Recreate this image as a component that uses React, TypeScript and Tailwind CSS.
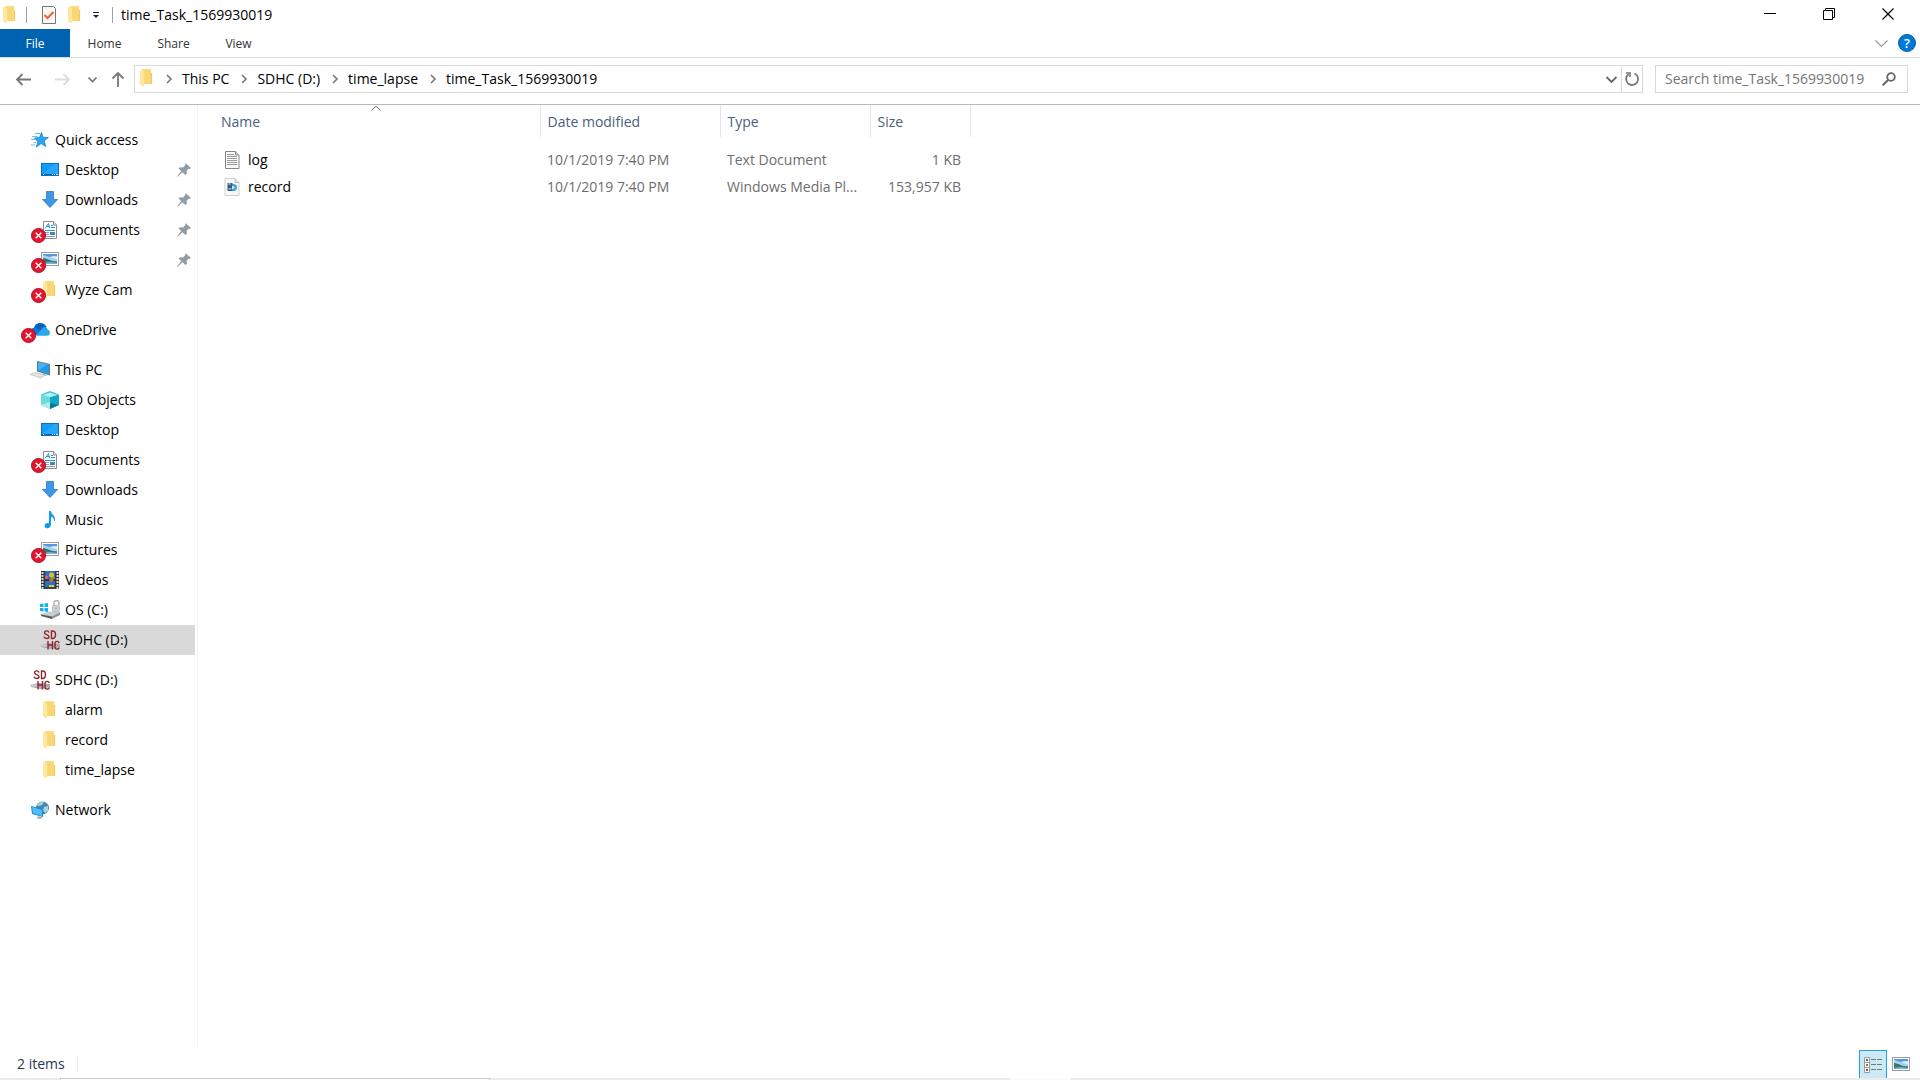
import React from "react";

type IconProps = { className?: string };

const Svg = ({ children, className = "", box = 18 }: { children: React.ReactNode; className?: string; box?: number }) => (
  <svg viewBox={`0 0 ${box} ${box}`} className={`shrink-0 ${className || "size-[18px]"}`} aria-hidden="true">
    {children}
  </svg>
);

const Folder = () => (
  <Svg>
    <path d="M4 0h9v4.500h1V15H4z" fill="#ffdb7c" />
    <path d="M12.800 4h1.300v11H8z" fill="#f0cb66" />
    <path d="M6 1.500h7V15H7z" fill="#f9d777" />
    <path d="M2 .8l4 1.700v15L2 15.500z" fill="#ffe79c" />
  </Svg>
);
const Star = () => (
  <Svg>
    <path d="M10.500 1.500l1.600 4.800 5.300.2-4.200 3.300 1.500 5.700-4.500-3-4.800 3.500 1.400-5.500L3.500 7l5-.5z" fill="#2ba5ef" stroke="#1682cf" strokeWidth=".8" />
    <path d="M4 2.500h5M1 5.500h5.500M0 8.500h4M2.500 11.500h2.500M0 14h4" stroke="#6fbdf0" strokeWidth="1" />
  </Svg>
);
const Desktop = () => (
  <Svg>
    <rect x=".5" y="2.500" width="17" height="12" fill="#139bfb" stroke="#0b70bd" />
    <path d="M1 14L13 3h4v9z" fill="#35adff" opacity=".6" />
    <path d="M1 13.500h16" stroke="#0761a8" />
    <path d="M2 13.500h1M11 13.500h1M13 13.500h1M15 13.500h2" stroke="#fff" />
  </Svg>
);
const Download = () => (
  <Svg><path d="M5.500.5h7v8h4L9 16.500 1.500 8.500h4z" fill="#3d97e5" stroke="#2879c5" strokeWidth=".8" /></Svg>
);
const Doc = () => (
  <Svg>
    <path d="M2.500.5h10l3 3.500v13.500h-13z" fill="#fff" stroke="#8b8b8b" />
    <path d="M12.500.5V4h3" fill="#e5e5e5" stroke="#8b8b8b" />
    <path d="M4 7.500L7.500 2.500 8.500 7M6 5.500h3M10 4.500h2M10 6.500h4M4 9.500h10" stroke="#2394dc" fill="none" />
    <path d="M4 11.500h4M4 13.500h4M4 15.500h10" stroke="#8b9aa7" />
    <rect x="9" y="11" width="5" height="3" fill="#3d88b5" />
  </Svg>
);
const Picture = () => (
  <Svg>
    <rect x=".5" y="1.500" width="17" height="13" fill="#fff" stroke="#9c9c9c" />
    <path d="M2 3h14v10H2z" fill="#a8d2f3" />
    <path d="M2 3h14v2L9 6 2 4z" fill="#5499df" />
    <path d="M9 6c3-1 5-1 7 0v2c-3-1-5-1-7-2z" fill="#e6f3fc" />
    <path d="M2 7c4 0 6 3 14 3.500v.5H2z" fill="#39765a" />
    <path d="M2 10.500h14V13H2z" fill="#387dac" />
    <path d="M2 12l7-1 7 1v1H2z" fill="#78b5c9" />
  </Svg>
);
const Cloud = () => (
  <Svg className="-ml-px size-5" box={20}>
    <path d="M4 8c1-6 10-7 12.500-1L11 12 5 9z" fill="#0862b8" />
    <path d="M0 12c0-3.500 4-5.500 7.500-3.500L17 15H4c-2.500 0-4-1.500-4-3z" fill="#0f78d4" />
    <path d="M6 15.500l6-7c3-3 5.500-1 5.500 1 3.500 1 3 6.300-.5 6.300H5z" fill="#28a8ea" />
  </Svg>
);
const Computer = () => (
  <Svg className="-ml-px size-5" box={20}>
    <path d="M7 1l13 3v11.500L7 11.500z" fill="#68747d" />
    <path d="M8 2.200l11 2.600V14L8 10.500z" fill="#45b5fa" />
    <path d="M8 10.500L17 4.500l2 .3V14z" fill="#219de8" />
    <path d="M12 13l3 1 2 2-4-1z" fill="#9aa5ac" />
    <path d="M0 14.500l5-2 10 2.500-4 3z" fill="#e0e3e6" stroke="#b5babf" strokeWidth=".6" />
  </Svg>
);
const Cube = () => (
  <Svg>
    <path d="M0 3.500L9 6v12l-9-4z" fill="#6ed9dc" />
    <path d="M9 6l9-2.500V14l-9 4z" fill="#10a8c2" />
    <path d="M0 3.500L9 0l9 3.500L9 6z" fill="#3cc3cf" />
    <path d="M2 4l7-2.500L16 4 9 6z" fill="#b6f1ef" />
    <path d="M0 14l9-3v7z" fill="#a7edec" />
    <path d="M9 12l9 2-9 4z" fill="#087b94" />
  </Svg>
);
const Music = () => (
  <Svg>
    <path d="M8 0h2c0 4 5 4 4 10h-1c0-3-1-4-3-4v7c0 3-2 5-5 4-2-1-2-4 1-5h2z" fill="#0c9cf0" />
  </Svg>
);
const Video = () => (
  <Svg>
    <path d="M0 0h18v18H0z" fill="#343434" />
    <path d="M1.500 1v17M16.500 1v17" stroke="#ddd" strokeWidth="2" strokeDasharray="2 1" />
    <path d="M4 0h10v8H4zM4 10h10v8H4z" fill="#2c6fc4" />
    <path d="M4 6h3v2H4zM10 6h4v2h-4z" fill="#7c993e" />
    <circle cx="10.500" cy="4" r="2.500" fill="#e5be2c" /><circle cx="5.500" cy="6" r="1.500" fill="#d45ca5" />
    <path d="M8 8h5l-2 3H9z" fill="#d27021" /><path d="M8 14h5v2H8z" fill="#e9c531" /><path d="M4 16h10v2H4z" fill="#304e37" />
  </Svg>
);
const Drive = () => (
  <Svg className="-ml-px size-5" box={20}>
    <path d="M0 4l3.500-.5V7H0zM4.500 3.400L8 3v4H4.500zM0 8h3.500v3.500L0 11zM4.500 8H8v4l-3.500-.4z" fill="#12b2ef" />
    <path d="M1 14l8-2.500 11 .5v2l-8 3.500-11-2z" fill="#c8cdd0" />
    <path d="M1 14.500l11 2V19L1 16z" fill="#555d63" /><path d="M12 16.500l8-4V15l-8 4z" fill="#8c9499" />
    <path d="M14 6V3a2.500 2.500 0 0 1 5 0v2" stroke="#a7adb1" fill="none" strokeWidth="1.300" />
    <rect x="12.500" y="5.500" width="7" height="6" rx="1" fill="#d0d4d6" stroke="#969ea3" strokeWidth=".6" />
    <path d="M16 7.500v2" stroke="#838b90" />
  </Svg>
);
const SdCard = () => (
  <Svg className="-ml-px size-5" box={20}>
    <path d="M1 15l7-2 12 1v3l-9 2-10-2z" fill="#a5abaf" /><path d="M0 14.500h9v2H0z" fill="#cbd0d3" />
    <path d="M9 2.700C8.500.3 4.500.3 4.500 2.700c0 2.300 4.500 1.500 4.500 4 0 2.400-4.500 2.400-5 0M11.500 1v7.500h1c4 0 4-7.500 0-7.500zM8 11v8.500M12.500 11v8.500M8 15h4.500M19.200 13c-.5-2.300-4.200-2.300-4.200.5v3.500c0 2.800 3.700 2.800 4.200.5" stroke="#91272e" strokeWidth="1.400" fill="none" />
  </Svg>
);
const Network = () => (
  <Svg>
    <circle cx="11.500" cy="7" r="6.500" fill="#438bae" />
    <path d="M6 5c2-5 6-4 7-4l-2 3-3 1zM13 6l4-1v5l-3 2-2-3z" fill="#a8d2dd" />
    <path d="M0 5l12 3v8L1 13z" fill="#168bd7" /><path d="M1 6l10 3v6L2 12z" fill="#54bcfa" />
    <path d="M7 15v1l-2 1 4 1 3-1-2-1z" fill="#a5acb1" />
  </Svg>
);
const TextFile = () => (
  <Svg>
    <path d="M1.500.5h10l3.500 3.500v13.500H1.500z" fill="#f8f8f8" stroke="#858585" /><path d="M11.500.5V4H15" fill="#ddd" stroke="#858585" />
    <path d="M3 3.500h7M3 5.500h10M3 7.500h10M3 9.500h10M3 11.500h10M3 13.500h10" stroke="#9b9b9b" />
  </Svg>
);
const MediaFile = () => (
  <Svg>
    <path d="M1 .5h10l4 4v13H1z" fill="#f8f8f8" stroke="#d0d0d0" /><path d="M11 .5v4h4" fill="#e5e5e5" stroke="#bbb" />
    <circle cx="9.500" cy="9.500" r="3.500" fill="#38a9e8" /><path d="M3.500 5h5v8h-5z" fill="#385b78" />
    <path d="M4.500 5h2v2h-2zM4.500 10h3v1.500h-3z" fill="#88b8da" /><path d="M8 7.500l3 2-3 2z" fill="#d9f0fc" />
  </Svg>
);
const TaskIcon = () => (
  <Svg><path d="M2.500.5h11l2 2v15h-13z" fill="#f8f8f8" stroke="#777" /><path d="M4.500 9l3 3 6-6" fill="none" stroke="#ef622c" strokeWidth="2" /></Svg>
);
const Pin = () => (
  <Svg className="size-3.5" box={14}>
    <path d="M8.500 0L14 5l-1.500 1-1-.2-2 2.200.5 2.500-1.500 1.500L5.300 9.200 1 13.500H0L4.200 8 1.500 5.500 3 4.200l3 .3L8.300 2z" fill="#929ca4" />
  </Svg>
);
const Chevron = ({ className }: IconProps) => (
  <Svg box={12} className={className}><path d="M4 2l4 4-4 4" fill="none" stroke="currentColor" strokeWidth="1.600" /></Svg>
);
const ErrorBadge = () => (
  <svg viewBox="0 0 16 16" className="absolute top-[7px] -left-2.5 size-[15px]" aria-label="Sync error">
    <circle cx="8" cy="8" r="7.500" fill="#e2152d" stroke="#a80f23" />
    <path d="M5 5l6 6M11 5l-6 6" stroke="#fff" strokeWidth="1.500" />
  </svg>
);

type Item = { label: string; icon: () => React.ReactElement; root?: boolean; pin?: boolean; error?: boolean; selected?: boolean };
const groups: Item[][] = [
  [
    { label: "Quick access", icon: Star, root: true },
    { label: "Desktop", icon: Desktop, pin: true },
    { label: "Downloads", icon: Download, pin: true },
    { label: "Documents", icon: Doc, pin: true, error: true },
    { label: "Pictures", icon: Picture, pin: true, error: true },
    { label: "Wyze Cam", icon: Folder, error: true },
  ],
  [{ label: "OneDrive", icon: Cloud, root: true, error: true }],
  [
    { label: "This PC", icon: Computer, root: true },
    { label: "3D Objects", icon: Cube },
    { label: "Desktop", icon: Desktop },
    { label: "Documents", icon: Doc, error: true },
    { label: "Downloads", icon: Download },
    { label: "Music", icon: Music },
    { label: "Pictures", icon: Picture, error: true },
    { label: "Videos", icon: Video },
    { label: "OS (C:)", icon: Drive },
    { label: "SDHC (D:)", icon: SdCard, selected: true },
  ],
  [
    { label: "SDHC (D:)", icon: SdCard, root: true },
    { label: "alarm", icon: Folder },
    { label: "record", icon: Folder },
    { label: "time_lapse", icon: Folder },
  ],
  [{ label: "Network", icon: Network, root: true }],
];

const files = [
  { name: "log", icon: TextFile, date: "10/1/2019 7:40 PM", type: "Text Document", size: "1 KB" },
  { name: "record", icon: MediaFile, date: "10/1/2019 7:40 PM", type: "Windows Media Pl...", size: "153,957 KB" },
];

const crumbs = ["This PC", "SDHC (D:)", "time_lapse", "time_Task_1569930019"];

function TitleBar() {
  return (
    <header className="flex h-[29px] items-center">
      <div className="flex items-center pl-px">
        <Folder />
        <span className="ml-[7px] h-4 w-px bg-gray-400" />
        <button className="ml-[13px]" aria-label="Properties"><TaskIcon /></button>
        <button className="ml-2" aria-label="New folder"><Folder /></button>
        <button className="ml-2" aria-label="Customize toolbar">
          <Svg box={8} className="size-2"><path d="M1 1.500h6" stroke="#222" /><path d="M1 4h6L4 7z" fill="#222" /></Svg>
        </button>
        <span className="ml-[12px] h-4 w-px bg-gray-400" />
      </div>
      <h1 className="ml-2 flex-1 text-[14px]">time_Task_1569930019</h1>
      <div className="flex gap-[46px] pr-[25px]">
        <button aria-label="Minimize"><Svg box={13} className="size-[13px]"><path d="M0 5.500h12" stroke="#000" /></Svg></button>
        <button aria-label="Restore"><Svg box={13} className="size-[13px]"><path d="M.5 2.500h9v9H.5zM2.500 2.500v-2h9v9h-2" fill="none" stroke="#000" /></Svg></button>
        <button aria-label="Close"><Svg box={13} className="size-[13px]"><path d="M.5.5l11 11M11.500.5l-11 11" stroke="#000" strokeWidth="1.200" /></Svg></button>
      </div>
    </header>
  );
}

function Ribbon() {
  return (
    <nav className="flex h-[29px] items-stretch border-b border-[#dadbdc] text-[12px] text-[#333]">
      <button className="w-[70px] bg-[#0063b1] pt-px text-white">File</button>
      <button className="w-[69px] pt-px">Home</button>
      <button className="w-[69px] pt-px">Share</button>
      <button className="w-[61px] pt-px">View</button>
      <div className="flex flex-1 items-center justify-end gap-[10px] pr-1">
        <button aria-label="Expand ribbon"><Svg box={13} className="size-[13px]"><path d="M.5 3.500l6 6 6-6" fill="none" stroke="#999" strokeWidth="1.200" /></Svg></button>
        <button aria-label="Help" className="size-[18px] rounded-full border border-[#0063b1] bg-[#0078d7] text-[13px] leading-4 font-semibold text-white">?</button>
      </div>
    </nav>
  );
}

function AddressBar() {
  return (
    <div className="flex h-[47px] items-center border-b border-[#b9b9b9] pr-3 pb-1 text-[14px]">
      <div className="flex w-[134px] shrink-0 items-center text-[#777]">
        <button aria-label="Back" className="ml-4"><Svg box={16} className="size-4"><path d="M15 8.500H1M6.500 3L1 8.500 6.500 14" stroke="currentColor" strokeWidth="1.800" fill="none" /></Svg></button>
        <button aria-label="Forward" className="ml-[23px] text-[#ddd]"><Svg box={16} className="size-4"><path d="M0 8.500h14M8.500 3L14 8.500 8.500 14" stroke="currentColor" strokeWidth="1.800" fill="none" /></Svg></button>
        <button aria-label="Recent locations" className="ml-[17px]"><Svg box={9} className="size-[9px]"><path d="M.5 2.500l4 4 4-4" stroke="currentColor" strokeWidth="1.600" fill="none" /></Svg></button>
        <button aria-label="Up" className="ml-[13px]"><Svg box={16} className="size-4"><path d="M8 16V2M2.500 7.500L8 2l5.500 5.500" stroke="currentColor" strokeWidth="1.800" fill="none" /></Svg></button>
      </div>
      <div className="flex h-7 flex-1 items-center border border-[#d9d9d9] pl-[3px]">
        <span className="-mt-0.5"><Folder /></span>
        <ol className="flex flex-1 items-center gap-0.5">
          {crumbs.map((c) => (
            <li key={c} className="flex items-center">
              <Chevron className="mr-[7px] ml-[7px] size-3 text-[#777]" />
              <a href="#">{c}</a>
            </li>
          ))}
        </ol>
        <button aria-label="Previous locations" className="px-1 text-[#666]"><Svg box={11} className="size-[11px]"><path d="M.5 3l5 5 5-5" stroke="currentColor" strokeWidth="1.800" fill="none" /></Svg></button>
        <button aria-label="Refresh" className="flex h-full w-[21px] items-center justify-center border-l border-[#d9d9d9] text-[#777]">
          <Svg box={16} className="size-4"><path d="M10.500 2.500A6 6 0 1 1 4.500 3.200" stroke="currentColor" strokeWidth="1.800" fill="none" /><path d="M2 2h4v4" stroke="currentColor" strokeWidth="1.600" fill="none" /></Svg>
        </button>
      </div>
      <label className="ml-3 flex h-7 w-[253px] items-center border border-[#d9d9d9] pr-[11px] pl-[9px]">
        <input type="search" aria-label="Search folder" placeholder="Search time_Task_1569930019" className="min-w-0 flex-1 outline-none placeholder:text-[#757575]" />
        <Svg box={14} className="size-3.5"><circle cx="9" cy="5" r="3.800" stroke="#666" strokeWidth="1.800" fill="none" /><path d="M6.300 7.700L.7 13.300" stroke="#666" strokeWidth="2" /></Svg>
      </label>
    </div>
  );
}

function Sidebar() {
  return (
    <aside className="flex w-[198px] shrink-0 flex-col gap-[10px] border-r border-[#f3f3f3] pt-5 pr-[2px]">
      {groups.map((group, g) => (
        <ul key={g}>
          {group.map(({ label, icon: Icon, root, pin, error, selected }) => (
            <li key={label}>
              <a href="#" className={`flex h-[30px] items-center pr-1 ${root ? "pl-[31px]" : "pl-[41px]"} ${selected ? "bg-[#d9d9d9]" : ""}`}>
                <span className="relative flex h-[18px] w-[18px] shrink-0 items-center">
                  <Icon />
                  {error && <ErrorBadge />}
                </span>
                <span className="ml-1.5 flex-1">{label}</span>
                {pin && <Pin />}
              </a>
            </li>
          ))}
        </ul>
      ))}
    </aside>
  );
}

function FileTable() {
  return (
    <main className="flex-1 pl-[9px]">
      <table className="w-[763px] table-fixed border-collapse text-left">
        <colgroup><col className="w-[333px]" /><col className="w-[180px]" /><col className="w-[150px]" /><col className="w-[100px]" /></colgroup>
        <thead>
          <tr className="h-8 text-[#4c607a]">
            <th className="relative border-r border-[#e5e5e5] pt-0.5 pl-3.5 font-normal">
              <Svg box={10} className="absolute -top-px left-[164px] size-2.5"><path d="M.5 6.500L5 2l4.500 4.500" fill="none" stroke="#777" /></Svg>
              Name
            </th>
            <th className="border-r border-[#e5e5e5] pt-0.5 pl-[7px] font-normal">Date modified</th>
            <th className="border-r border-[#e5e5e5] pt-0.5 pl-[7px] font-normal">Type</th>
            <th className="border-r border-[#e5e5e5] pt-0.5 pl-[7px] font-normal">Size</th>
          </tr>
        </thead>
        <tbody className="text-[#6d6d6d] before:block before:h-[9px]">
          {files.map(({ name, icon: Icon, date, type, size }) => (
            <tr key={name} className="h-[27px]">
              <td className="pl-[17px] text-black"><a href="#" className="flex items-center gap-1.5"><Icon />{name}</a></td>
              <td className="pl-[7px]">{date}</td>
              <td className="pl-[7px] whitespace-nowrap">{type}</td>
              <td className="pr-[9px] text-right">{size}</td>
            </tr>
          ))}
        </tbody>
      </table>
    </main>
  );
}

function StatusBar() {
  return (
    <footer className="shrink-0">
      <div className="flex h-[31px] items-stretch pr-[5px]">
        <div className="flex flex-1 items-center pt-0.5 pl-[17px] text-[#1e395b]">
          <span>2 items</span>
          <span className="ml-3 h-3.5 w-px bg-[#eee]" />
        </div>
        <button aria-label="Details view" className="mt-[3px] flex w-7 items-center justify-center border border-b-0 border-[#26a0da] bg-[#cbe8f6]">
          <Svg className="size-[18px]">
            <path d="M.5 1.500h5v5h-5zM.5 6.500h5v5h-5zM.5 11.500h5v5h-5z" fill="#fff" stroke="#999" />
            <path d="M2 3h2v2H2z" fill="#3c7893" /><path d="M2 8h2v2H2z" fill="#738d22" /><path d="M2 13h2v2H2z" fill="#bd3425" />
            <path d="M7 3.500h5M13 3.500h5M7 8.500h5M13 8.500h5M7 13.500h5M13 13.500h5" stroke="#777" />
          </Svg>
        </button>
        <button aria-label="Large icons view" className="mt-[3px] flex w-7 items-center justify-center pt-0.5"><Picture /></button>
      </div>
      <div className="flex h-0.5 bg-[#ebebeb]">
        <span className="w-[60px]" />
        <span className="w-[430px] border border-b-0 border-[#c8c8c8] bg-white" />
        <span className="w-[520px]" />
        <span className="w-[61px] bg-[#fafafa]" />
      </div>
    </footer>
  );
}

export default function App() {
  return (
    <div className="flex min-h-screen flex-col bg-white font-['Open_Sans',sans-serif] text-[14px] leading-5 text-black">
      <TitleBar />
      <Ribbon />
      <AddressBar />
      <div className="flex flex-1"><Sidebar /><FileTable /></div>
      <StatusBar />
    </div>
  );
}
